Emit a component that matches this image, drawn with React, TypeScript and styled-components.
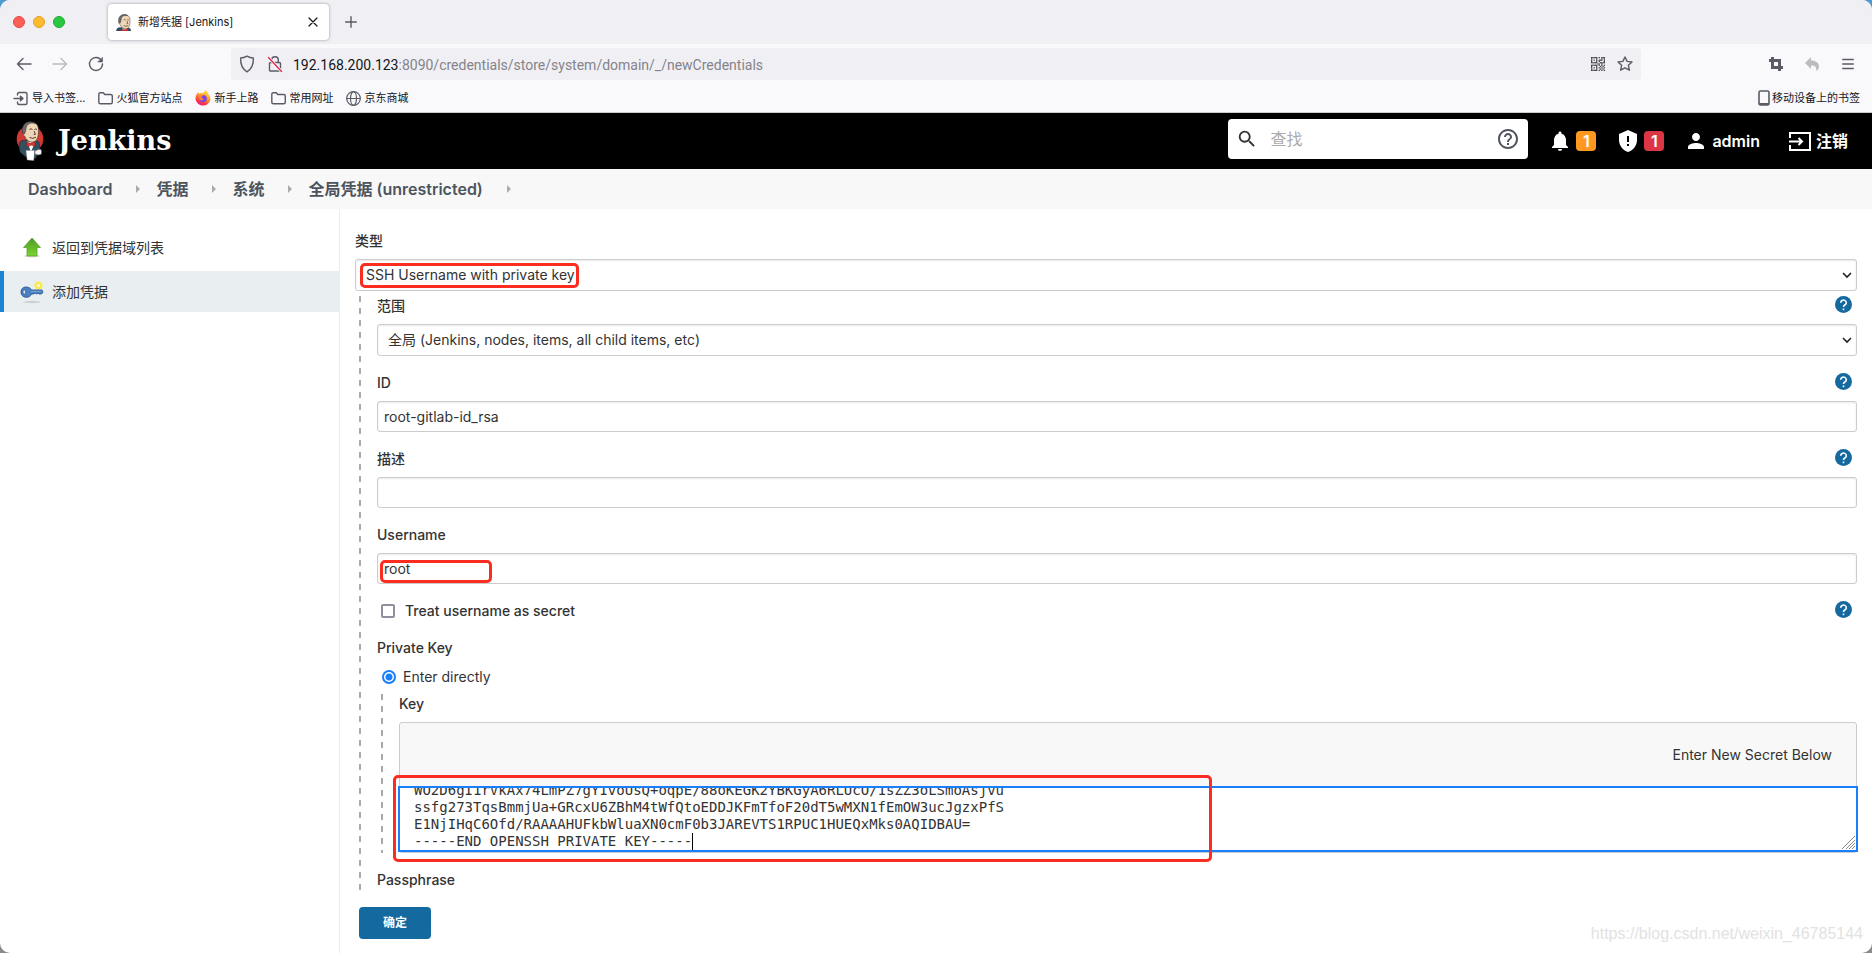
import React, { useEffect, useRef } from 'react';
import styled, { createGlobalStyle } from 'styled-components';
import { MdSearch, MdHelpOutline, MdNotifications, MdPerson } from 'react-icons/md';

const GlobalStyle = createGlobalStyle`
  *, *::before, *::after { box-sizing: border-box; }
  body {
    margin: 0;
    background: linear-gradient(#4f9bd0 0 50%, #8a8a8a 50% 100%);
    color: #333;
    font-family: Inter, "Noto Sans CJK SC", sans-serif;
    font-size: 14px;
    line-height: 20px;
  }
  button, input, select, textarea { font: inherit; color: inherit; margin: 0; }
  button { border: 0; padding: 0; background: none; cursor: pointer; }
  a { color: inherit; text-decoration: none; }
  svg { display: block; flex: none; }
`;

const Window = styled.div`
  display: flex;
  flex-direction: column;
  min-height: 100vh;
  overflow: hidden;
  border-radius: 10px;
  background: #fff;
  position: relative;
`;

/* ---------- browser chrome ---------- */

const TabStrip = styled.div`
  display: flex;
  align-items: center;
  height: 44px;
  padding-left: 13px;
  background: #f0f0f4;
`;
const Lights = styled.div`
  display: flex;
  gap: 8px;
  width: 95px;
`;
const Light = styled.span<{ $color: string; $edge: string }>`
  width: 12px;
  height: 12px;
  border-radius: 50%;
  background: ${p => p.$color};
  border: 1px solid ${p => p.$edge};
`;
const Tab = styled.div`
  display: flex;
  align-items: center;
  gap: 6px;
  width: 221px;
  height: 36px;
  padding: 0 8px;
  border-radius: 4px;
  background: #fff;
  box-shadow: 0 0 3px rgba(80, 80, 100, 0.6);
  font-size: 11px;
  color: #15141a;
`;
const TabTitle = styled.span`
  flex: 1;
`;
const IconButton = styled.button<{ $faded?: boolean }>`
  display: grid;
  place-items: center;
  width: 16px;
  height: 16px;
  color: ${p => (p.$faded ? '#bcbbc2' : '#5b5b66')};
`;
const NewTab = styled(IconButton)`
  margin-left: 14px;
`;
const NavBar = styled.div`
  display: flex;
  align-items: center;
  height: 40px;
  padding: 4px 16px;
  background: #f9f9fb;
`;
const NavGroup = styled.div<{ $width: number }>`
  display: flex;
  gap: 20px;
  width: ${p => p.$width}px;
`;
const RightGroup = styled(NavGroup)`
  justify-content: flex-end;
`;
const UrlBar = styled.div`
  display: flex;
  align-items: center;
  gap: 12px;
  flex: 1;
  height: 32px;
  padding: 0 8px;
  border-radius: 4px;
  background: #f0f0f4;
  color: #5b5b66;
`;
const Url = styled.span`
  flex: 1;
  margin-left: -2px;
  padding-top: 1px;
  font-family: Roboto, sans-serif;
  color: #84838b;
  b { font-weight: 400; color: #15141a; }
`;
const BookmarkBar = styled.div`
  display: flex;
  align-items: center;
  gap: 12px;
  height: 29px;
  padding: 0 12px 0 13px;
  border-bottom: 1px solid #ccc;
  background: #f9f9fb;
  font-size: 11px;
  color: #15141a;
`;
const Bookmark = styled.a<{ $end?: boolean }>`
  display: flex;
  align-items: center;
  gap: ${p => (p.$end ? 2 : 4)}px;
  margin-left: ${p => (p.$end ? 'auto' : 0)};
  svg { color: #5b5b66; }
`;

/* ---------- Jenkins header ---------- */

const Header = styled.header`
  display: flex;
  align-items: center;
  height: 56px;
  padding: 0 24px 0 14px;
  background: #000;
  color: #fff;
`;
const Brand = styled.a`
  display: flex;
  align-items: center;
  gap: 12px;
  margin-right: auto;
  font: 700 27px/32px "DejaVu Serif", serif;
`;
const SearchBox = styled.div`
  display: flex;
  align-items: center;
  width: 300px;
  height: 40px;
  margin-top: -4px;
  padding: 0 8px;
  border-radius: 4px;
  background: #fff;
  color: #333;
  input {
    flex: 1;
    min-width: 0;
    margin-left: 10px;
    border: 0;
    outline: 0;
    font-size: 16px;
    background: none;
  }
  input::placeholder { color: #aaa; }
`;
const HeaderLink = styled.a<{ $before: number; $gap: number }>`
  display: flex;
  align-items: center;
  gap: ${p => p.$gap}px;
  margin-left: ${p => p.$before}px;
  font-size: 16px;
  font-weight: 600;
`;
const Badge = styled.span<{ $color: string }>`
  width: 20px;
  height: 20px;
  border-radius: 4px;
  background: ${p => p.$color};
  text-align: center;
`;

const Crumbs = styled.nav`
  display: flex;
  align-items: center;
  height: 40px;
  padding-left: 28px;
  background: #f8f8f8;
  color: #4d545d;
  font-size: 16px;
  font-weight: 600;
`;
const CrumbArrow = styled.span`
  margin: 0 16px 0 24px;
  border: 4px solid transparent;
  border-left-color: #aaa;
  border-right-width: 0;
`;

/* ---------- body ---------- */

const Body = styled.div`
  display: flex;
  flex: 1;
`;
const Side = styled.aside`
  display: flex;
  flex-direction: column;
  gap: 3px;
  width: 340px;
  flex: none;
  padding-top: 18px;
  border-right: 1px solid #e6eef0;
`;
const SideLink = styled.a<{ $active?: boolean }>`
  display: flex;
  align-items: center;
  gap: 8px;
  height: 41px;
  padding-left: 16px;
  border-left: 4px solid ${p => (p.$active ? '#1d84d0' : 'transparent')};
  background: ${p => (p.$active ? '#e9eff1' : 'none')};
`;
const Main = styled.main`
  flex: 1;
  min-width: 0;
  padding: 22px 15px 14px;
`;
const Nested = styled.div`
  margin-left: 4px;
  padding-left: 18px;
  background: repeating-linear-gradient(#aaa 0 6px, transparent 6px 12px) 0 0 / 2px 100% no-repeat;
`;
const Outer = styled(Nested)`
  margin-top: 5px;
  margin-bottom: 14px;
  padding-bottom: 3px;
`;
const Inner = styled(Nested)`
  margin-bottom: 17px;
`;
const Field = styled.div`
  margin-bottom: 17px;
`;
const LabelRow = styled.div`
  display: flex;
  align-items: center;
  justify-content: space-between;
  height: 20px;
  padding-right: 5px;
  font-weight: 500;
`;
const Heading = styled.div`
  height: 20px;
  font-weight: 500;
`;
const HelpButton = styled.button`
  align-self: flex-start;
  width: 17px;
  height: 17px;
  border-radius: 50%;
  background: #14699f;
`;
const Control = styled.div`
  position: relative;
  margin-top: 8px;
`;
const TextInput = styled.input`
  display: block;
  width: 100%;
  height: 31px;
  padding: 0 6px;
  border: 1px solid #ccc;
  border-radius: 3px;
  background: #fff;
  box-shadow: inset 0 1px 2px rgba(0, 0, 0, 0.09);
  outline: 0;
`;
const Select = styled.select`
  display: block;
  width: 100%;
  height: 32px;
  padding: 0 28px 0 10px;
  border: 1px solid #ccc;
  border-radius: 3px;
  background: #fff;
  box-shadow: inset 0 1px 2px rgba(0, 0, 0, 0.09);
  appearance: none;
  outline: 0;
`;
const Chevron = styled.svg`
  position: absolute;
  right: 5px;
  top: 11px;
  pointer-events: none;
`;
const Highlight = styled.div<{ $box: [number, number, number, number] }>`
  position: absolute;
  left: ${p => p.$box[0]}px;
  top: ${p => p.$box[1]}px;
  width: ${p => p.$box[2]}px;
  height: ${p => p.$box[3]}px;
  border: 3px solid #fb2c20;
  border-radius: 5px;
  pointer-events: none;
`;
const CheckRow = styled.div`
  display: flex;
  align-items: center;
  justify-content: space-between;
  height: 20px;
  margin-bottom: 17px;
  padding: 0 5px 0 4px;
`;
const CheckLabel = styled.label<{ $radio?: boolean }>`
  display: flex;
  align-items: center;
  gap: ${p => (p.$radio ? 7 : 10)}px;
  font-weight: ${p => (p.$radio ? 400 : 500)};
`;
const Check = styled.input`
  width: 14px;
  height: 14px;
  appearance: none;
  border: 2px solid #8f8f9d;
  border-radius: 2px;
  background: #fff;
`;
const Radio = styled.input`
  width: 14px;
  height: 14px;
  appearance: none;
  border: 2px solid #1a7ffb;
  border-radius: 50%;
  background: radial-gradient(#1a7ffb 0 3px, #fff 4px);
`;
const RadioRow = styled.div`
  display: flex;
  height: 20px;
  margin: 9px 0 7px;
  padding-left: 5px;
`;
const SecretBox = styled.div`
  position: relative;
  margin-top: 8px;
  border: 1px solid #ccc;
  border-radius: 3px;
  background: #f8f8f8;
`;
const SecretHint = styled.div`
  height: 63px;
  padding: 22px 24px 0 0;
  text-align: right;
`;
const KeyArea = styled.textarea`
  display: block;
  width: calc(100% + 4px);
  height: 66px;
  margin: 0 -2px;
  padding: 0 14px;
  border: 2px solid #1a7ffb;
  background: #fff;
  outline: 0;
  resize: none;
  overflow-y: scroll;
  scrollbar-width: none;
  white-space: pre;
  caret-color: transparent;
  font: 14px/17px "DejaVu Sans Mono", monospace;
`;
const Caret = styled.span`
  position: absolute;
  left: 292px;
  bottom: 2px;
  width: 1px;
  height: 17px;
  background: #000;
`;
const Grip = styled.svg`
  position: absolute;
  right: 1px;
  bottom: 3px;
`;
const Submit = styled.button`
  display: block;
  width: 72px;
  height: 32px;
  margin-left: 4px;
  border-radius: 4px;
  background: #14699f;
  color: #fff;
  font-size: 12px;
  font-weight: 600;
`;
const Watermark = styled.div`
  position: absolute;
  right: 9px;
  bottom: 9px;
  font: 16px/20px "Liberation Sans", sans-serif;
  color: #e2e2e2;
`;

/* ---------- drawings ---------- */

const stroke = { fill: 'none', stroke: 'currentColor', strokeWidth: 1.4, strokeLinecap: 'round', strokeLinejoin: 'round' } as const;

const Butler = ({ width, height, crop }: { width: number; height: number; crop?: boolean }) => (
  <svg width={width} height={height} viewBox={crop ? '5 0 22 24' : '1 0 30 40'}>
    {!crop && <circle cx="16" cy="18" r="13.3" fill="#d33833" />}
    <path d="M8.200 19.500 20 18.500l5 2.500 1.500 9-3 3.500-2 4-6 .5-5-3-4.500-4L5 25l1-4z" fill="#335061" stroke="#1a2630" strokeWidth=".6" />
    <path d="M13 20.500 17 31l4-10z" fill="#fff" />
    <path d="M10 7c0-4 3-6 6.500-6C22 1 24.500 4 24.500 9c0 5-.5 11-5 12-4 .6-7.500-2-9-6-1.500-.5-2-3-.8-4z" fill="#f0d6b7" stroke="#4a3a30" strokeWidth=".7" />
    <path d="M8.500 12C7.500 6 10 1 16 .8c2.500 0 4.500.7 5.500 1.800-3-1-6-.5-7.500.9-2 1.500-1.800 4-2.500 7l-1 2.500z" fill="#6d6b6d" stroke="#2b2b2b" strokeWidth=".5" />
    <path d="M15.500 8.500q1.500-1.500 3 0M20.500 8.500q1.300-1 2.400 0M20 10l1.400 3.300-1.800.3M15.500 16.500q3.500 1.800 6.500-.3" fill="none" stroke="#3b2d25" strokeWidth=".9" />
    <path d="m12.500 21 4 1.300 4.500-1.500.5 4.500-4.500-1.200-4 2.200z" fill="#d33833" stroke="#7b1512" strokeWidth=".5" />
    <path d="M12 29.500h8.500l-.8 10-6.500-.6z" fill="#fff" stroke="#999" strokeWidth=".4" />
    <path d="M21 30q4-2.800 6.500-1v4q-3 2-6.500 0z" fill="#f4f4f4" stroke="#555" strokeWidth=".5" />
  </svg>
);
const Folder = () => (
  <svg width="15" height="15" viewBox="0 0 15 15" {...stroke}>
    <path d="M.8 3.200q0-1.500 1.500-1.500h3l1.500 1.800h6q1.500 0 1.500 1.500v6.200q0 1.500-1.500 1.500H2.300Q.8 12.700.8 11.200z" />
  </svg>
);
const ImportIcon = () => (
  <svg width="15" height="15" viewBox="0 0 15 15" {...stroke}>
    <path d="M4.500 4V3q0-1.500 1.500-1.500h6.500q1.500 0 1.500 1.500v9q0 1.500-1.500 1.500H6q-1.500 0-1.500-1.500v-1M1 7.500h8" />
    <path d="m7.500 5.300 2.500 2.200-2.500 2.200z" fill="currentColor" />
  </svg>
);
const Firefox = () => (
  <svg width="16" height="16" viewBox="0 0 16 16">
    <defs>
      <linearGradient id="flame" x1=".8" y1="0" x2=".3" y2="1">
        <stop offset="0" stopColor="#fff044" />
        <stop offset=".45" stopColor="#ff9a28" />
        <stop offset=".8" stopColor="#ff3647" />
        <stop offset="1" stopColor="#e31587" />
      </linearGradient>
    </defs>
    <path d="M10.500 0c2 1.500 2.500 3 3 4.500 1 .6 2 2.500 2 4.200A7.500 7.300 0 1 1 2.200 3.600L3.200 2l.8 1.800q2-1 3.500-.6Q9 2.500 10.500 0z" fill="url(#flame)" />
    <circle cx="8.200" cy="8.600" r="3.600" fill="#7a45e6" />
    <path d="M4 6.500q2-2.500 5-.9-2.400.3-2.700 2 .8 1.600 2.700.9-1 2.200-3 1.800Q4 9.500 4 6.500z" fill="#ff8a2a" />
  </svg>
);
const Globe = () => (
  <svg width="15" height="15" viewBox="0 0 15 15" {...stroke} strokeWidth={1.2}>
    <circle cx="7.500" cy="7.500" r="6.800" />
    <ellipse cx="7.500" cy="7.500" rx="3" ry="6.800" />
    <path d="M1 7.500h13" />
  </svg>
);
const Shield = () => (
  <svg width="16" height="18" viewBox="0 0 16 18" {...stroke}>
    <path d="M8 1.200q3 1.800 6.300 1.800.6 9.500-6.300 13.800Q1.100 12.500 1.700 3 5 3 8 1.200z" />
  </svg>
);
const BrokenLock = () => (
  <svg width="16" height="18" viewBox="0 0 16 18" {...stroke}>
    <rect x="2.500" y="7.500" width="11" height="8.500" rx="1" />
    <path d="M4.700 7.500V5a3.300 3.300 0 0 1 6.600 0v2.500" />
    <path d="m1.500 2.500 13 14" stroke="#f9f9fb" strokeWidth="3" />
    <path d="m1.500 2.500 13 14" stroke="#e22850" />
  </svg>
);
const QR_ROWS = ['11111010111', '10001000101', '10101011101', '10001010001', '11111001111', '00000110100', '11111010101', '10001001010', '10101010101', '10001001010', '11111010101'];
const QrIcon = () => (
  <svg width="14" height="14" viewBox="0 0 11 11" fill="#3f3f48">
    {QR_ROWS.flatMap((row, y) => [...row].map((c, x) => (c === '1' ? <rect key={`${x}-${y}`} x={x} y={y} width="1" height="1" /> : null)))}
  </svg>
);
const Star = () => (
  <svg width="16" height="16" viewBox="0 0 16 16" {...stroke}>
    <path d="m8 1 2.100 4.400 4.900.6-3.600 3.300 1 4.900L8 11.800l-4.400 2.400 1-4.900L1 6l4.900-.6z" />
  </svg>
);
const WarnShield = () => (
  <svg width="18" height="22" viewBox="0 0 18 22">
    <path d="M9 0 0 4v6c0 5.500 3.800 10.500 9 12 5.200-1.500 9-6.500 9-12V4z" fill="#fff" />
    <path d="M8 6h2v6H8zM8 14h2v2H8z" fill="#000" />
  </svg>
);
const LogoutIcon = () => (
  <svg width="22" height="19" viewBox="0 0 22 19" fill="none" stroke="#fff" strokeWidth="2">
    <path d="M1 6V1h20v17H1v-5M0 9.500h12M9.500 6l3.500 3.500L9.500 13" />
  </svg>
);
const UpArrow = () => (
  <svg width="24" height="24" viewBox="0 0 24 24">
    <defs>
      <linearGradient id="leaf" x2="0" y2="1">
        <stop offset="0" stopColor="#4e9a2a" />
        <stop offset="1" stopColor="#7ad52c" />
      </linearGradient>
    </defs>
    <ellipse cx="12" cy="20" rx="8" ry="1.500" fill="#ddd" />
    <path d="m12 2 8.500 9.500H17V20H7v-8.500H3.500z" fill="url(#leaf)" stroke="#58a331" strokeWidth=".8" />
  </svg>
);
const KeyIcon = () => (
  <svg width="24" height="24" viewBox="0 0 24 24">
    <ellipse cx="12" cy="22" rx="9" ry="1.200" fill="#ccd2d4" />
    <circle cx="18.500" cy="5.500" r="4" fill="#fce94f" />
    <circle cx="18.500" cy="5.500" r="1.600" fill="#fffbd0" />
    <path d="M6 7c3 0 5 1.500 5.500 3H22l1 2-1.500 2H19l-1-1-1.500 1-1.500-1-1.500 1h-2c-.7 2-2.500 3.300-5 3.300C3 17.300 1 15 1 12s2-5 5-5z" fill="#4a7fc0" stroke="#2d5a94" strokeWidth=".9" />
    <ellipse cx="4.300" cy="12" rx="1.400" ry="2" fill="#e9eff1" stroke="#2d5a94" strokeWidth=".7" />
    <path d="M11 11.300h10.500" stroke="#8fb3dd" strokeWidth=".8" />
  </svg>
);
const Help = ({ topic }: { topic: string }) => (
  <HelpButton type="button" aria-label={topic}>
    <svg width="17" height="17" viewBox="0 0 17 17" fill="none" stroke="#fff" strokeWidth="1.600">
      <path d="M5.700 6.700a2.800 2.600 0 1 1 4.400 2.100Q8.500 9.700 8.500 11" />
      <path d="M8.500 12.500v1.700" />
    </svg>
  </HelpButton>
);
const Down = () => (
  <Chevron width="10" height="10" viewBox="0 0 10 10" fill="none" stroke="#222" strokeWidth="1.600">
    <path d="m1 3 4 4 4-4" />
  </Chevron>
);

const KEY_TEXT = [
  'WO2D6gI1rVkAx74LmPZ7gYIvoUsQ+oqpE/88oKEGK2YBKGyA6RLUcO/1sZZ3oLSmoAsjvu',
  'ssfg273TqsBmmjUa+GRcxU6ZBhM4tWfQtoEDDJKFmTfoF20dT5wMXN1fEmOW3ucJgzxPfS',
  'E1NjIHqC6Ofd/RAAAAHUFkbWluaXN0cmF0b3JAREVTS1RPUC1HUEQxMks0AQIDBAU=',
  '-----END OPENSSH PRIVATE KEY-----',
].join('\n');

export default function App() {
  const keyRef = useRef<HTMLTextAreaElement>(null);
  useEffect(() => {
    if (keyRef.current) keyRef.current.scrollTop = keyRef.current.scrollHeight;
  }, []);

  return (
    <Window>
      <GlobalStyle />
      <TabStrip>
        <Lights>
          <Light $color="#fe5f57" $edge="#e2483f" />
          <Light $color="#febb2e" $edge="#e0a02a" />
          <Light $color="#2ac840" $edge="#1dac2b" />
        </Lights>
        <Tab>
          <Butler width={16} height={17} crop />
          <TabTitle>新增凭据 [Jenkins]</TabTitle>
          <IconButton aria-label="关闭">
            <svg width="10" height="10" viewBox="0 0 10 10" {...stroke} stroke="#15141a" strokeWidth={1.2}><path d="m1 1 8 8M9 1 1 9" /></svg>
          </IconButton>
        </Tab>
        <NewTab aria-label="新标签页">
          <svg width="12" height="12" viewBox="0 0 12 12" {...stroke}><path d="M6 .7v10.600M.7 6h10.600" /></svg>
        </NewTab>
      </TabStrip>
      <NavBar>
        <NavGroup $width={215}>
          <IconButton aria-label="后退">
            <svg width="16" height="16" viewBox="0 0 16 16" {...stroke}><path d="M15 8H1.500M7 2.500 1.500 8 7 13.500" /></svg>
          </IconButton>
          <IconButton aria-label="前进" $faded>
            <svg width="16" height="16" viewBox="0 0 16 16" {...stroke}><path d="M1 8h13.500M9 2.500 14.500 8 9 13.500" /></svg>
          </IconButton>
          <IconButton aria-label="刷新">
            <svg width="16" height="16" viewBox="0 0 16 16" {...stroke}>
              <path d="M13.500 4.500A6.500 6.500 0 1 0 14.500 8" />
              <path d="M14.500 1.500v4.500H10z" fill="currentColor" strokeWidth=".6" />
            </svg>
          </IconButton>
        </NavGroup>
        <UrlBar>
          <Shield />
          <BrokenLock />
          <Url><b>192.168.200.123</b>:8090/credentials/store/system/domain/_/newCredentials</Url>
          <QrIcon />
          <Star />
        </UrlBar>
        <RightGroup $width={215}>
          <IconButton aria-label="截图">
            <svg width="16" height="16" viewBox="0 0 16 16" fill="none" stroke="currentColor" strokeWidth="3">
              <path d="M4.500 1v10.500H15M1 4.500h10.500V15" />
            </svg>
          </IconButton>
          <IconButton aria-label="撤销" $faded>
            <svg width="16" height="16" viewBox="0 0 16 16" fill="currentColor">
              <path d="M7 1v3.500c5 0 8 2.500 8 6 0 2-1 3.500-3 4.500 1-3.500-.5-5.500-5-5.500V13L1 7z" />
            </svg>
          </IconButton>
          <IconButton aria-label="菜单">
            <svg width="12" height="12" viewBox="0 0 12 12" {...stroke}><path d="M.7 1.500h10.600M.7 6h10.600M.7 10.500h10.600" /></svg>
          </IconButton>
        </RightGroup>
      </NavBar>
      <BookmarkBar>
        <Bookmark href="#"><ImportIcon />导入书签...</Bookmark>
        <Bookmark href="#"><Folder />火狐官方站点</Bookmark>
        <Bookmark href="#"><Firefox />新手上路</Bookmark>
        <Bookmark href="#"><Folder />常用网址</Bookmark>
        <Bookmark href="#"><Globe />京东商城</Bookmark>
        <Bookmark href="#" $end>
          <svg width="12" height="16" viewBox="0 0 12 16" fill="none" stroke="currentColor" strokeWidth="1.600">
            <rect x="1" y="1" width="10" height="14" rx="1.500" />
            <path d="M1 14h10" strokeWidth="2" />
          </svg>
          移动设备上的书签
        </Bookmark>
      </BookmarkBar>

      <Header>
        <Brand href="#"><Butler width={32} height={40} />Jenkins</Brand>
        <SearchBox>
          <MdSearch size={22} />
          <input type="search" aria-label="查找" placeholder="查找" />
          <MdHelpOutline size={24} color="#4d545d" />
        </SearchBox>
        <HeaderLink href="#" $before={20} $gap={4} aria-label="通知">
          <MdNotifications size={24} />
          <Badge $color="#fe9820">1</Badge>
        </HeaderLink>
        <HeaderLink href="#" $before={23} $gap={7} aria-label="安全">
          <WarnShield />
          <Badge $color="#dc3545">1</Badge>
        </HeaderLink>
        <HeaderLink href="#" $before={20} $gap={4}><MdPerson size={24} />admin</HeaderLink>
        <HeaderLink href="#" $before={29} $gap={5}><LogoutIcon />注销</HeaderLink>
      </Header>

      <Crumbs>
        <a href="#">Dashboard</a><CrumbArrow />
        <a href="#">凭据</a><CrumbArrow />
        <a href="#">系统</a><CrumbArrow />
        <a href="#">全局凭据 (unrestricted)</a><CrumbArrow />
      </Crumbs>

      <Body>
        <Side>
          <SideLink href="#"><UpArrow />返回到凭据域列表</SideLink>
          <SideLink href="#" $active><KeyIcon />添加凭据</SideLink>
        </Side>
        <Main>
          <LabelRow><label htmlFor="kind">类型</label></LabelRow>
          <Control>
            <Select id="kind"><option>SSH Username with private key</option></Select>
            <Down />
            <Highlight $box={[5, 4, 219, 25]} />
          </Control>
          <Outer>
            <Field>
              <LabelRow><label htmlFor="scope">范围</label><Help topic="范围" /></LabelRow>
              <Control>
                <Select id="scope"><option>全局 (Jenkins, nodes, items, all child items, etc)</option></Select>
                <Down />
              </Control>
            </Field>
            <Field>
              <LabelRow><label htmlFor="cred-id">ID</label><Help topic="ID" /></LabelRow>
              <Control><TextInput id="cred-id" defaultValue="root-gitlab-id_rsa" /></Control>
            </Field>
            <Field>
              <LabelRow><label htmlFor="desc">描述</label><Help topic="描述" /></LabelRow>
              <Control><TextInput id="desc" /></Control>
            </Field>
            <Field>
              <LabelRow><label htmlFor="user">Username</label></LabelRow>
              <Control>
                <TextInput id="user" defaultValue="root" />
                <Highlight $box={[3, 7, 112, 23]} />
              </Control>
            </Field>
            <CheckRow>
              <CheckLabel><Check type="checkbox" />Treat username as secret</CheckLabel>
              <Help topic="Treat username as secret" />
            </CheckRow>
            <Heading>Private Key</Heading>
            <RadioRow>
              <CheckLabel $radio><Radio type="radio" name="source" defaultChecked />Enter directly</CheckLabel>
            </RadioRow>
            <Inner>
              <LabelRow><label htmlFor="key">Key</label></LabelRow>
              <SecretBox>
                <SecretHint>Enter New Secret Below</SecretHint>
                <KeyArea id="key" ref={keyRef} defaultValue={KEY_TEXT} spellCheck={false} />
                <Caret />
                <Grip width="13" height="13" viewBox="0 0 13 13" stroke="#888" strokeWidth="1">
                  <path d="M0 13 13 0M4 13l9-9M7 13l6-6M10 13l3-3" />
                </Grip>
                <Highlight $box={[-7, 52, 819, 87]} />
              </SecretBox>
            </Inner>
            <Heading>Passphrase</Heading>
          </Outer>
          <Submit type="submit">确定</Submit>
        </Main>
      </Body>
      <Watermark>https://blog.csdn.net/weixin_46785144</Watermark>
    </Window>
  );
}
